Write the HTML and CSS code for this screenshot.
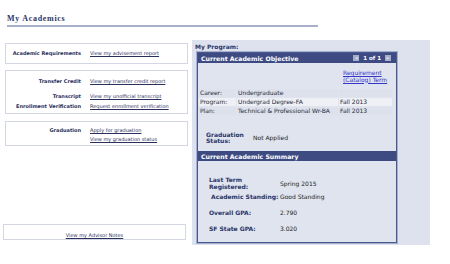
FILE: index.html
```html
<!DOCTYPE html>
<html lang="en">
<head>
  <meta charset="UTF-8">
  <title>My Academics</title>
  <link rel="stylesheet" href="styles.css">
</head>
<body>

  <div class="page">
    <h1 class="page-title">My Academics</h1>

    <div class="main">
      <div class="left-col">
        <div class="link-box box-req">
          <div class="link-row">
            <span class="row-label">Academic Requirements</span>
            <a href="#">View my advisement report</a>
          </div>
        </div>

        <div class="link-box box-records">
          <div class="link-row">
            <span class="row-label">Transfer Credit</span>
            <a href="#">View my transfer credit report</a>
          </div>
          <div class="link-row row-wide">
            <span class="row-label">Transcript</span>
            <a href="#">View my unofficial transcript</a>
          </div>
          <div class="link-row">
            <span class="row-label">Enrollment Verification</span>
            <a href="#">Request enrollment verification</a>
          </div>
        </div>

        <div class="link-box box-grad">
          <div class="link-row">
            <span class="row-label">Graduation</span>
            <span class="link-stack">
              <a href="#">Apply for graduation</a>
              <a href="#">View my graduation status</a>
            </span>
          </div>
        </div>

        <div class="link-box advisor-box">
          <a href="#">View my Advisor Notes</a>
        </div>
      </div>

      <div class="program-panel">
        <div class="panel-title">My Program:</div>

        <div class="program-box">
          <div class="section-head">
            <span>Current Academic Objective</span>
            <span class="pager">
              <span class="pager-btn">&#9664;</span>
              <span>1 of 1</span>
              <span class="pager-btn">&#9654;</span>
            </span>
          </div>

          <div class="objective-body">
            <div class="req-term"><a href="#">Requirement<br>(Catalog) Term</a></div>

            <table class="plan-table">
              <tr>
                <td class="c1">Career:</td>
                <td class="c2">Undergraduate</td>
                <td class="c3"></td>
              </tr>
              <tr class="alt">
                <td class="c1">Program:</td>
                <td class="c2">Undergrad Degree-FA</td>
                <td class="c3">Fall 2013</td>
              </tr>
              <tr>
                <td class="c1">Plan:</td>
                <td class="c2">Technical &amp; Professional Wr-BA</td>
                <td class="c3">Fall 2013</td>
              </tr>
            </table>

            <div class="grad-status">
              <span class="field-label">Graduation<br>Status:</span>
              <span>Not Applied</span>
            </div>
          </div>

          <div class="section-head">
            <span>Current Academic Summary</span>
          </div>

          <div class="summary-body">
            <div class="summary-row">
              <span class="field-label">Last Term<br>Registered:</span>
              <span>Spring 2015</span>
            </div>
            <div class="summary-row standing">
              <span class="field-label">Academic Standing:</span>
              <span>Good Standing</span>
            </div>
            <div class="summary-row">
              <span class="field-label">Overall GPA:</span>
              <span>2.790</span>
            </div>
            <div class="summary-row">
              <span class="field-label">SF State GPA:</span>
              <span>3.020</span>
            </div>
          </div>
        </div>
      </div>
    </div>
  </div>

</body>
</html>
```

FILE: styles.css
```css
/* Base Styles */
body {
  margin: 0;
  background-color: #fff;
  font-family: 'DejaVu Sans', Verdana, sans-serif;
  font-size: 5px;
  color: #222;
}

a {
  color: #2b2f5e;
  text-decoration: underline;
}

.page {
  padding: 14px 0 0 5px;
}

.page-title {
  margin: 0 0 0 2px;
  width: 311px;
  padding-bottom: 2px;
  border-bottom: 2px solid #a9b0cc;
  font-family: 'Liberation Serif', serif;
  font-size: 8px;
  letter-spacing: 0.7px;
  color: #2a3568;
}

.main {
  display: flex;
  gap: 4px;
  margin-top: 13px;
}

/* Left link boxes */
.left-col {
  width: 183px;
  padding-top: 3px;
}

.link-box {
  border: 1px solid #d3d7e3;
  line-height: 6px;
}

.box-req {
  padding: 6px 0 7px;
}

.box-records {
  margin-top: 6px;
  padding: 7px 0 4px;
}

.box-grad {
  margin-top: 7px;
  padding: 5px 0 3px;
}

.link-row {
  display: grid;
  grid-template-columns: 75px 1fr;
  column-gap: 9px;
}

.link-row + .link-row {
  margin-top: 4px;
}

.link-row.row-wide {
  margin-top: 9px;
}

.row-label {
  text-align: right;
  font-weight: bold;
  color: #2b2f5e;
}

.link-stack {
  display: flex;
  flex-direction: column;
  gap: 3px;
}

.advisor-box {
  width: 181px;
  margin: 78px 0 0 -2px;
  padding: 7px 0 1px;
  text-align: center;
}

/* Right program panel */
.program-panel {
  width: 238px;
  height: 205px;
  background-color: #dde2ee;
  font-size: 6px;
}

.panel-title {
  padding: 3px 0 0 3px;
  font-weight: bold;
  color: #2a3568;
  line-height: 7px;
}

.program-box {
  width: 198px;
  margin: 2px 0 0 5px;
  border: 1px solid #4a5891;
  outline: 1px solid #a7aecb;
  background-color: #dfe4ef;
  padding-bottom: 10px;
}

.section-head {
  display: flex;
  justify-content: space-between;
  align-items: center;
  height: 10px;
  padding: 0 0 0 3px;
  background-color: #3e4b83;
  color: #fff;
  font-size: 6.2px;
  font-weight: bold;
}

.pager {
  display: flex;
  align-items: center;
  gap: 4px;
  padding-right: 5px;
  font-size: 5.5px;
}

.pager-btn {
  display: inline-block;
  width: 6px;
  height: 6px;
  background-color: #a4adca;
  color: #e6e9f3;
  font-size: 3px;
  line-height: 6px;
  text-align: center;
}

.objective-body {
  padding: 7px 0 7px;
}

.req-term {
  margin-left: 145px;
  line-height: 6.5px;
}

.req-term a {
  color: #3535c9;
}

.plan-table {
  margin-top: 5px;
  border-collapse: separate;
  border-spacing: 1px;
  color: #2a2a3a;
}

.plan-table td {
  height: 8px;
  padding: 0 1px;
  line-height: 8px;
  background-color: #dce1eb;
  white-space: nowrap;
}

.plan-table tr.alt td {
  background-color: #eef0f5;
}

.plan-table .c1 { width: 35px; }
.plan-table .c2 { width: 99px; }
.plan-table .c3 { width: 51px; }

.grad-status {
  display: grid;
  grid-template-columns: 47px 1fr;
  align-items: center;
  margin: 16px 0 0 8px;
  line-height: 6px;
}

.field-label {
  font-weight: bold;
  color: #2a3568;
}

.summary-body {
  padding: 15px 0 0 11px;
}

.summary-row {
  display: grid;
  grid-template-columns: 71px 1fr;
  align-items: center;
  line-height: 7px;
}

.summary-row + .summary-row {
  margin-top: 9px;
}

.summary-row.standing {
  margin-top: 3px;
}

.summary-row.standing .field-label {
  margin-left: 2px;
}
```
